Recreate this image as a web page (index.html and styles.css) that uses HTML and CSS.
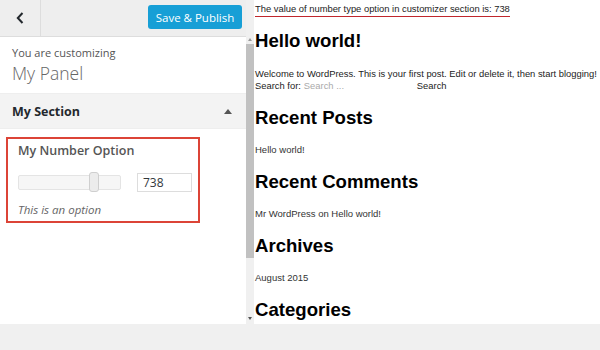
FILE: index.html
```html
<!DOCTYPE html>
<html>
<head>
<meta charset="utf-8">
<link rel="stylesheet" href="styles.css">
</head>
<body>
<div class="app">
  <div class="workspace">
    <aside class="sidebar">
      <div class="panel">
        <header class="topbar">
          <div class="back"><svg width="8" height="12" viewBox="0 0 8 12"><path d="M6.5 1 L1.8 6 L6.5 11" fill="none" stroke="#23282d" stroke-width="2"/></svg></div>
          <div class="topbar-fill"><button class="publish">Save &amp; Publish</button></div>
        </header>
        <div class="info">
          <div class="info-label">You are customizing</div>
          <div class="info-title">My Panel</div>
        </div>
        <div class="section-head">
          <span>My Section</span>
          <span class="tri"></span>
        </div>
        <div class="section-body">
          <div class="control">
            <div class="control-title">My Number Option</div>
            <div class="control-row">
              <div class="range"><div class="thumb"></div></div>
              <div class="num">738</div>
            </div>
            <div class="desc">This is an option</div>
          </div>
        </div>
      </div>
      <div class="scrollbar">
        <div class="arrow up"></div>
        <div class="track"><div class="sthumb"></div></div>
        <div class="arrow down"></div>
      </div>
    </aside>
    <main class="preview">
      <p class="value-line">The value of number type option in customizer section is: 738</p>
      <h1 class="post-title">Hello world!</h1>
      <p class="post-text">Welcome to WordPress. This is your first post. Edit or delete it, then start blogging!</p>
      <div class="search"><span>Search for:</span><span class="search-input">Search ...</span><span class="search-btn">Search</span></div>
      <h2 class="widget-title">Recent Posts</h2>
      <p class="widget-text">Hello world!</p>
      <h2 class="widget-title">Recent Comments</h2>
      <p class="widget-text">Mr WordPress on Hello world!</p>
      <h2 class="widget-title">Archives</h2>
      <p class="widget-text">August 2015</p>
      <h2 class="widget-title">Categories</h2>
    </main>
  </div>
  <div class="bottom"></div>
</div>
</body>
</html>
```
FILE: styles.css
```css
* { box-sizing: border-box; }
html, body { margin: 0; padding: 0; background: #f0f0f0; }
.app { width: 600px; height: 350px; display: flex; flex-direction: column; overflow: hidden; }
.workspace { height: 324px; display: flex; background: #fff; }
.bottom { flex: 1; background: #f0f0f0; }

.sidebar { width: 254px; display: flex; background: #eee; }
.panel { width: 246px; display: flex; flex-direction: column; font-family: "Open Sans", sans-serif; color: #555; overflow: hidden; }
.topbar { height: 37px; display: flex; background: #eee; border-bottom: 1px solid #ddd; }
.back { width: 41px; display: flex; align-items: center; justify-content: center; border-right: 1px solid #ddd; padding-right: 1px; }
.topbar-fill { flex: 1; display: flex; justify-content: flex-end; align-items: flex-start; padding: 5px 4px 0 0; }
.publish { height: 24px; width: 94px; border: none; border-radius: 3px; background: #179fd6; color: #fff; font-family: "Open Sans", sans-serif; font-size: 11.5px; padding: 0; }

.info { background: #fff; height: 57px; padding: 8px 12px 0; border-bottom: 1px solid #eee; }
.info-label { font-size: 11px; line-height: 16px; color: #555; }
.info-title { font-size: 17.5px; line-height: 24px; font-weight: 300; color: #666; }

.section-head { height: 35px; background: #f3f3f3; display: flex; align-items: center; justify-content: space-between; padding: 0 14px 0 12px; font-size: 12.5px; font-weight: 700; color: #23282d; border-bottom: 1px solid #eee; }
.tri { width: 0; height: 0; border-left: 4px solid transparent; border-right: 4px solid transparent; border-bottom: 5px solid #555; }

.section-body { flex: 1; background: #fff; padding: 8px 0 0 6px; }
.control { width: 194px; height: 86px; border: 2px solid #dc4437; padding: 3px 0 0 10px; }
.control-title { font-size: 12.5px; font-weight: 600; color: #555; line-height: 18px; }
.control-row { display: flex; align-items: center; margin-top: 12px; height: 20px; }
.range { width: 103px; height: 15px; background: #f6f6f6; border: 1px solid #e4e4e4; border-radius: 2px; display: flex; align-items: center; padding-left: 70px; }
.thumb { width: 10px; height: 20px; background: #ececec; border: 1px solid #cfcfcf; border-radius: 3px; }
.num { margin-left: 16px; width: 55px; height: 19px; border: 1px solid #ddd; font-size: 12px; line-height: 17px; padding-left: 5px; color: #32373c; }
.desc { font-size: 11.5px; font-style: italic; color: #666; margin-top: 10px; line-height: 16px; }

.scrollbar { width: 8px; display: flex; flex-direction: column; background: #f0f0f0; }
.arrow { display: flex; justify-content: center; }
.arrow.up { height: 44px; align-items: flex-end; padding-bottom: 3px; }
.arrow.up::after { content: ""; border-left: 2px solid transparent; border-right: 2px solid transparent; border-bottom: 3px solid #999; }
.track { flex: 1; display: flex; flex-direction: column; }
.sthumb { height: 214px; background: #c1c1c1; }
.arrow.down { height: 12px; align-items: center; }
.arrow.down::after { content: ""; border-left: 2px solid transparent; border-right: 2px solid transparent; border-top: 3px solid #555; }

.preview { flex: 1; background: #fff; padding: 2px 0 0 1px; font-family: "Liberation Sans", Arial, sans-serif; color: #222; overflow: hidden; }
.value-line { margin: 0; width: fit-content; font-size: 9.4px; line-height: 13px; padding-bottom: 1px; border-bottom: 1px solid #c0272d; color: #222; }
.post-title { margin: 13px 0 16px; font-size: 18.6px; line-height: 22px; font-weight: 700; color: #000; }
.post-text { margin: 0; font-size: 9.4px; line-height: 12px; white-space: nowrap; }
.search { display: flex; font-size: 9.4px; line-height: 12px; margin-bottom: 15px; }
.search-input { margin-left: 3px; width: 113px; color: #aaa; }
.search-btn { color: #222; }
.widget-title { margin: 0 0 15px; font-size: 18.6px; line-height: 22px; font-weight: 700; color: #000; }
.widget-text { margin: 0 0 15px; font-size: 9.5px; line-height: 12px; color: #333; }
```
